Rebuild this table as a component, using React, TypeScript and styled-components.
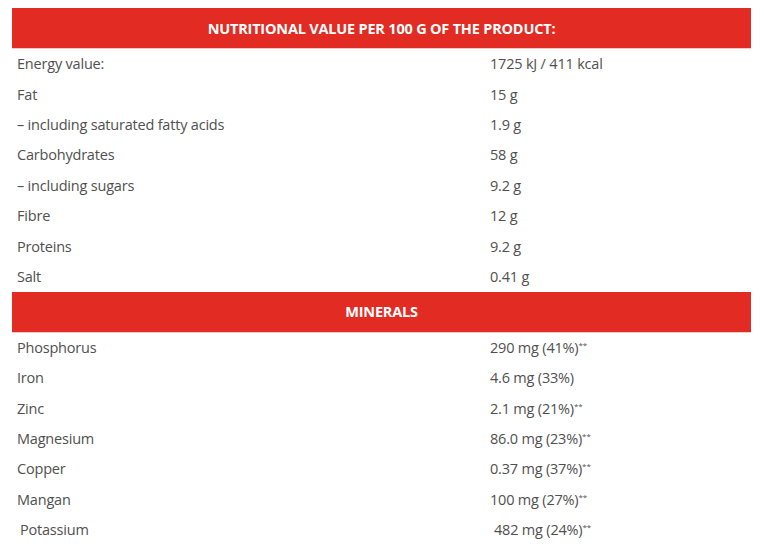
import React from "react";
import styled, { createGlobalStyle } from "styled-components";

const Global = createGlobalStyle`
  html, body { margin: 0; padding: 0; background: #fff; }
  body { font-family: "Open Sans", "Liberation Sans", sans-serif; }
`;

const Page = styled.div`
  padding: 8px 13px 0 12px;
`;

const Table = styled.table`
  width: 739px;
  border-collapse: collapse;
  table-layout: fixed;
`;

const NameCol = styled.col`
  width: 473px;
`;

const HeadCell = styled.th`
  background: #e22b22;
  color: #fff;
  height: 40px;
  padding: 0;
  font-size: 14.5px;
  font-weight: 700;
  letter-spacing: -0.2px;
  text-align: center;
  text-transform: uppercase;
  border-bottom: 1px solid #f3c9c6;
`;

const Row = styled.tr`
  height: 30.4px;
`;

const NameCell = styled.td<{ $indent?: boolean }>`
  padding: 0 0 0 ${(p) => (p.$indent ? 8 : 5)}px;
  font-size: 14.5px;
  color: #505050;
  letter-spacing: -0.2px;
  vertical-align: middle;
`;

const ValueCell = styled.td<{ $indent?: boolean }>`
  padding: 0 0 0 ${(p) => (p.$indent ? 9 : 5)}px;
  font-size: 14.5px;
  color: #505050;
  letter-spacing: -0.2px;
  vertical-align: middle;
`;

const Sup = styled.sup`
  font-size: 8px;
  vertical-align: 5px;
  letter-spacing: 0;
`;

type Item = { name: string; value: string; star?: boolean; indent?: boolean };

const nutrition: Item[] = [
  { name: "Energy value:", value: "1725 kJ / 411 kcal" },
  { name: "Fat", value: "15 g" },
  { name: "– including saturated fatty acids", value: "1.9 g" },
  { name: "Carbohydrates", value: "58 g" },
  { name: "– including sugars", value: "9.2 g" },
  { name: "Fibre", value: "12 g" },
  { name: "Proteins", value: "9.2 g" },
  { name: "Salt", value: "0.41 g" },
];

const minerals: Item[] = [
  { name: "Phosphorus", value: "290 mg (41%)", star: true },
  { name: "Iron", value: "4.6 mg (33%)" },
  { name: "Zinc", value: "2.1 mg (21%)", star: true },
  { name: "Magnesium", value: "86.0 mg (23%)", star: true },
  { name: "Copper", value: "0.37 mg (37%)", star: true },
  { name: "Mangan", value: "100 mg (27%)", star: true },
  { name: "Potassium", value: "482 mg (24%)", star: true, indent: true },
];

const Rows = ({ items }: { items: Item[] }) => (
  <>
    {items.map((it) => (
      <Row key={it.name}>
        <NameCell $indent={it.indent}>{it.name}</NameCell>
        <ValueCell $indent={it.indent}>
          {it.value}
          {it.star && <Sup>**</Sup>}
        </ValueCell>
      </Row>
    ))}
  </>
);

export default function App() {
  return (
    <Page>
      <Global />
      <Table>
        <colgroup>
          <NameCol />
          <col />
        </colgroup>
        <tbody>
          <tr>
            <HeadCell colSpan={2}>Nutritional value per 100 g of the product:</HeadCell>
          </tr>
          <Rows items={nutrition} />
          <tr>
            <HeadCell colSpan={2}>Minerals</HeadCell>
          </tr>
          <Rows items={minerals} />
        </tbody>
      </Table>
    </Page>
  );
}
